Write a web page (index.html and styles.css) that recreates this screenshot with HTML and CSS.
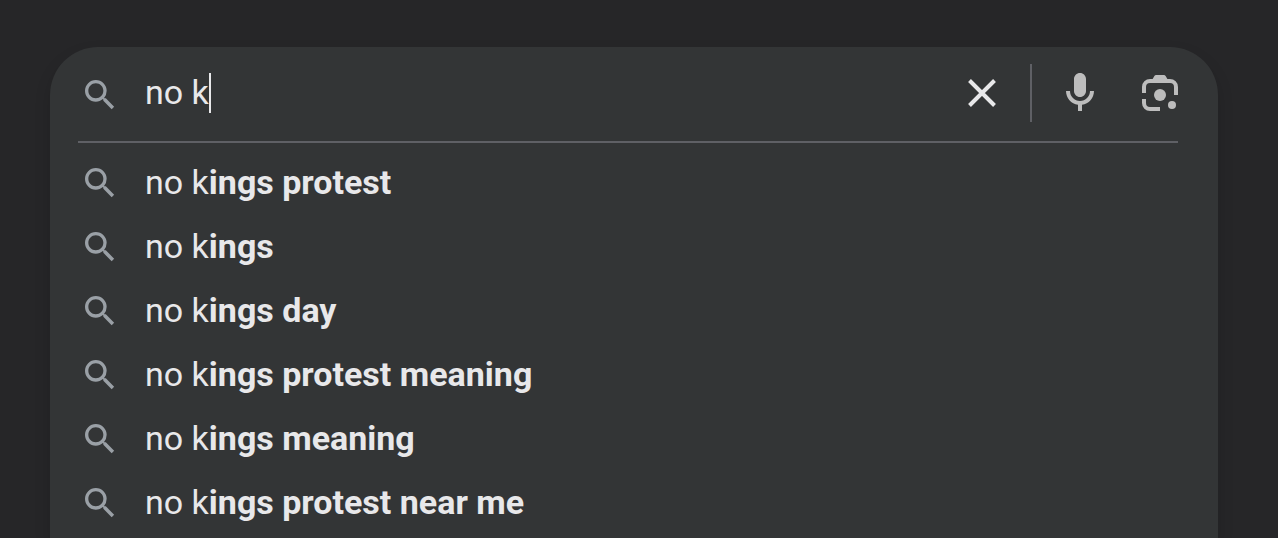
FILE: index.html
```
<!DOCTYPE html>
<html lang="en">
<head>
    <meta charset="utf-8">
    <title>Search</title>
    <meta name="viewport" content="width=device-width, initial-scale=1.0">
    <link rel="stylesheet" href="styles.css">
</head>
<body>
    <!-- Shared icon -->
    <svg class="sprite" aria-hidden="true">
        <symbol id="icon-search" viewBox="0 0 24 24">
            <path d="M15.5 14h-.79l-.28-.27A6.47 6.47 0 0 0 16 9.5 6.5 6.5 0 1 0 9.5 16c1.61 0 3.09-.59 4.23-1.57l.27.28v.79l5 4.99L20.49 19l-4.99-5zm-6 0C7.01 14 5 11.99 5 9.5S7.01 5 9.5 5 14 7.01 14 9.5 11.99 14 9.5 14z"/>
        </symbol>
    </svg>

    <form class="search-box" role="search">
        <div class="search-bar">
            <svg class="search-icon" aria-hidden="true"><use href="#icon-search"/></svg>
            <label class="query">
                <input type="text" id="query" aria-label="Search" value="no k" size="4" autocomplete="off">
                <span class="caret"></span>
            </label>
            <button type="button" class="clear" aria-label="Clear">
                <svg viewBox="0 0 48 48"><path d="M11.500 11.500l25 25M36.500 11.500l-25 25" fill="none" stroke="currentColor" stroke-width="4"/></svg>
            </button>
            <span class="separator"></span>
            <button type="button" class="voice" aria-label="Search by voice">
                <svg viewBox="0 0 24 24"><path d="M12 14c1.66 0 3-1.34 3-3V5c0-1.66-1.34-3-3-3S9 3.34 9 5v6c0 1.66 1.34 3 3 3zm5-3c0 2.76-2.24 5-5 5s-5-2.24-5-5H5c0 3.53 2.61 6.43 6 6.92V21h2v-3.08c3.39-.49 6-3.39 6-6.92h-2z"/></svg>
            </button>
            <button type="button" class="lens" aria-label="Search by image">
                <svg viewBox="0 0 48 48">
                    <path d="M8 24v-6a6 6 0 0 1 6-6h20a6 6 0 0 1 6 6v8M8 30v4a6 6 0 0 0 6 6h10" fill="none" stroke="currentColor" stroke-width="4"/>
                    <path d="M20 6h8q1 0 1.600 1l2.400 4H16l2.400-4q.6-1 1.600-1z"/>
                    <circle cx="24" cy="26" r="6"/>
                    <circle cx="36" cy="36" r="4"/>
                </svg>
            </button>
        </div>

        <!-- Suggestions -->
        <ul class="suggestions">
            <li>
                <svg class="search-icon" aria-hidden="true"><use href="#icon-search"/></svg>
                <a href="#">no k<b>ings protest</b></a>
            </li>
            <li>
                <svg class="search-icon" aria-hidden="true"><use href="#icon-search"/></svg>
                <a href="#">no k<b>ings</b></a>
            </li>
            <li>
                <svg class="search-icon" aria-hidden="true"><use href="#icon-search"/></svg>
                <a href="#">no k<b>ings day</b></a>
            </li>
            <li>
                <svg class="search-icon" aria-hidden="true"><use href="#icon-search"/></svg>
                <a href="#">no k<b>ings protest meaning</b></a>
            </li>
            <li>
                <svg class="search-icon" aria-hidden="true"><use href="#icon-search"/></svg>
                <a href="#">no k<b>ings meaning</b></a>
            </li>
            <li>
                <svg class="search-icon" aria-hidden="true"><use href="#icon-search"/></svg>
                <a href="#">no k<b>ings protest near me</b></a>
            </li>
        </ul>
    </form>
</body>
</html>
```
FILE: styles.css
```
* {
    box-sizing: border-box;
}

body {
    margin: 0;
    padding: 47px 60px 0 50px;
    background-color: #262628;
    color: #e8e8ea;
    font-family: Roboto, Arial, sans-serif;
    font-size: 34px;
    line-height: 40px;
}

.sprite {
    display: none;
}

svg {
    display: block;
    fill: currentColor;
}

.search-box {
    min-height: calc(100vh - 47px);
    padding: 0 40px 0 28px;
    background-color: #333536;
    border-radius: 48px 48px 0 0;
    box-shadow: 0 8px 16px rgba(0, 0, 0, 0.15);
}

.search-bar {
    display: flex;
    align-items: center;
    height: 96px;
    padding: 0 0 2px 2px;
    border-bottom: 2px solid #5f6065;
}

.search-icon {
    flex: none;
    width: 40px;
    height: 40px;
    color: #9aa0a6;
}

.search-bar .search-icon {
    margin-top: 4px;
}

.query {
    display: flex;
    flex: 1;
    align-items: center;
    margin-left: 25px;
    cursor: text;
}

.query input {
    field-sizing: content;
    padding: 0 0 2px;
    border: none;
    outline: none;
    background: none;
    color: inherit;
    font: inherit;
    caret-color: transparent;
}

.caret {
    width: 2px;
    height: 40px;
    background-color: #e8e8ea;
}

button {
    padding: 0;
    border: none;
    background: none;
    color: #bdbdbd;
    cursor: pointer;
}

button svg {
    width: 48px;
    height: 48px;
}

.clear {
    color: #e8e8ea;
}

.separator {
    width: 2px;
    height: 58px;
    margin: 0 24px;
    background-color: #5f6065;
}

.lens {
    margin-left: 32px;
    margin-right: -6px;
}

.suggestions {
    margin: 0;
    padding: 8px 0 0 2px;
    list-style: none;
}

.suggestions li {
    display: flex;
    align-items: center;
    height: 64px;
}

.suggestions a {
    margin-left: 25px;
    padding-bottom: 2px;
    color: inherit;
    text-decoration: none;
    white-space: nowrap;
}
```
